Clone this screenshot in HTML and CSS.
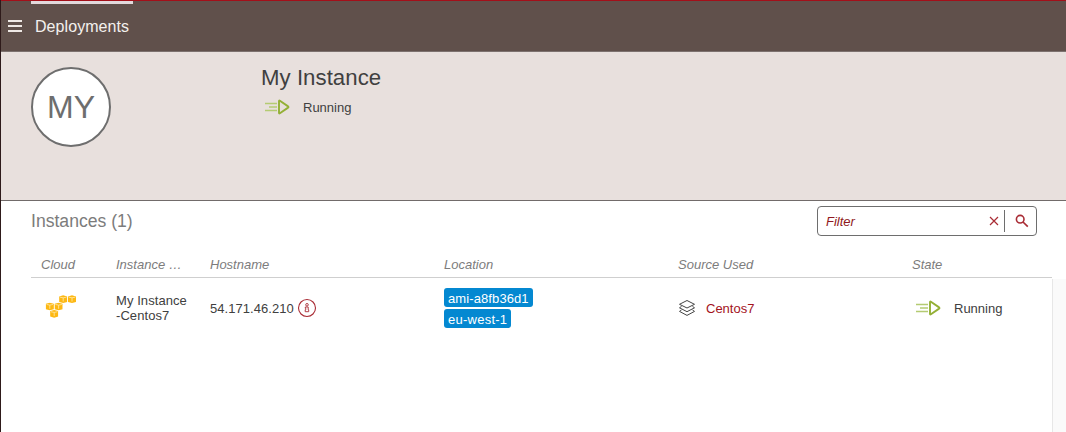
FILE: index.html
```html
<!DOCTYPE html>
<html lang="en">
<head>
<meta charset="utf-8">
<title>Deployments</title>
<link rel="stylesheet" href="styles.css">
</head>
<body>
<svg class="defs" width="0" height="0">
  <symbol id="run" viewBox="0 0 26 16">
    <path d="M1 4.5h12M5 8h8M1 11.5h12" fill="none" stroke="#b4cb72" stroke-width="1.4"/>
    <path d="M15 2.2v11.6q0 1 .9.4l8.200-5.600q.8-.6 0-1.200l-8.200-5.600q-.9-.6-.9.4z" fill="none" stroke="#94b036" stroke-width="1.9" stroke-linejoin="round"/>
  </symbol>
  <symbol id="box" viewBox="0 0 9 9">
    <path d="M.2 1.6 4.500.4 8.800 1.600V7.400L4.500 8.600.2 7.400z" fill="#fdb813"/>
    <path d="M1 2.300 4.500 3 8 2.300M4.500 3V7" fill="none" stroke="#ffedb8" stroke-width=".8"/>
  </symbol>
</svg>
<div class="app">
  <header class="topbar">
    <svg class="menu" viewBox="0 0 14 12"><path d="M0 1h14M0 6h14M0 11h14" stroke="#eee8e5" stroke-width="2"/></svg>
    <div class="tab">Deployments</div>
  </header>
  <section class="banner">
    <div class="avatar">MY</div>
    <div class="summary">
      <h1 class="title">My Instance</h1>
      <div class="state"><svg class="run"><use href="#run"/></svg><span>Running</span></div>
    </div>
  </section>
  <main class="content">
    <div class="toolbar">
      <h2 class="heading">Instances (1)</h2>
      <div class="filter">
        <span class="placeholder">Filter</span>
        <svg class="clear" viewBox="0 0 10 10"><path d="M1 1l8 8M9 1l-8 8" stroke="#a92c35" stroke-width="1.2"/></svg>
        <span class="divider"></span>
        <svg class="search" viewBox="0 0 14 14"><circle cx="5.2" cy="5.2" r="3.8" fill="none" stroke="#a92c35" stroke-width="1.6"/><path d="M8 8l4.8 4.6" stroke="#a92c35" stroke-width="1.7"/></svg>
      </div>
    </div>
    <div class="row head">
      <span>Cloud</span><span>Instance …</span><span>Hostname</span><span>Location</span><span>Source Used</span><span>State</span>
    </div>
    <div class="body">
      <div class="row data">
        <div class="cloud">
          <svg width="32" height="24" viewBox="0 0 32 24">
            <use href="#box" x="14" y="1" width="8.4" height="8.4"/>
            <use href="#box" x="22.8" y="1" width="8.4" height="8.4"/>
            <use href="#box" x="0.6" y="8.3" width="8.4" height="8.4"/>
            <use href="#box" x="9.4" y="8.3" width="8.4" height="8.4"/>
            <use href="#box" x="5" y="15.6" width="8.4" height="8.4"/>
          </svg>
        </div>
        <div class="name">My Instance<br>-Centos7</div>
        <div class="host"><span>54.171.46.210</span>
          <svg width="20" height="20" viewBox="0 0 20 20" fill="none" stroke="#a92c35"><circle cx="10" cy="10" r="8.5" stroke-width="1.1"/><circle cx="10" cy="6.800" r="1.300" stroke-width=".9"/><path d="M8.300 9h2.900v2.800h.5v1.900H8.200v-1.900h.6V10.300h-.5z" stroke-width=".9"/></svg>
        </div>
        <div class="tags"><span class="tag">ami-a8fb36d1</span><span class="tag region">eu-west-1</span></div>
        <div class="source">
          <svg width="18" height="18" viewBox="0 0 18 18" fill="none" stroke="#444" stroke-width="1" stroke-linejoin="round"><path d="M9 1.500l7.500 3.800L9 9 1.500 5.300zM3.500 7.400l-2 1.400L9 12.700l7.500-3.900-2-1.400M3.500 11l-2 1.400L9 16.400l7.500-4-2-1.400"/></svg>
          <span>Centos7</span>
        </div>
        <div class="state"><svg class="run"><use href="#run"/></svg><span>Running</span></div>
      </div>
      <div class="scrollbar"></div>
    </div>
  </main>
</div>
</body>
</html>
```
FILE: styles.css
```css
* { box-sizing: border-box; }
body {
  margin: 0;
  font: 13px/15px "Liberation Sans", Arial, sans-serif;
  color: #404040;
  background: #fff;
}
.defs { display: block; height: 0; }
.app {
  height: 432px;
  display: flex;
  flex-direction: column;
  border-left: 1px solid #2e1a1a;
  overflow: hidden;
}
.topbar {
  height: 52px;
  flex: none;
  display: flex;
  align-items: flex-start;
  background: #60504b;
  border-top: 1px solid #a30f19;
  border-bottom: 1px solid #7d726f;
}
.menu { width: 14px; height: 12px; margin: 19px 9px 0 7px; }
.tab {
  width: 102px;
  height: 50px;
  padding-left: 4px;
  border-top: 3px solid #e2d9dc;
  font-size: 16px;
  line-height: 45px;
  letter-spacing: .07px;
  color: #f4f0ee;
}
.banner {
  height: 149px;
  flex: none;
  display: flex;
  padding: 15px 0 0 30px;
  background: #e8e0dd;
  border-bottom: 1px solid #716b6a;
}
.avatar {
  width: 80px;
  height: 80px;
  border: 2px solid #6e6e6e;
  border-radius: 50%;
  background: #fff;
  color: #6e6e6e;
  font-size: 32px;
  line-height: 76px;
  text-align: center;
}
.summary { margin-left: 150px; }
.title { margin: -2px 0 0; font-size: 22.2px; line-height: 26px; font-weight: 400; letter-spacing: .05px; }
.state { display: flex; align-items: center; gap: 13px; }
.summary .state { margin: 8px 0 0 3px; }
.run { width: 26px; height: 16px; }
.content { flex: 1; display: flex; flex-direction: column; padding-left: 30px; }
.toolbar { height: 50px; display: flex; justify-content: space-between; padding: 5px 29px 0 0; }
.heading { margin: 0; font-size: 17.6px; line-height: 30px; font-weight: 400; color: #7c7c7c; }
.filter {
  width: 220px;
  height: 30px;
  display: flex;
  align-items: center;
  padding: 0 7px 0 8px;
  border: 1px solid #6e6e6e;
  border-radius: 4px;
}
.placeholder { flex: 1; font-style: italic; color: #8f1820; }
.clear { width: 10px; height: 10px; }
.divider { width: 1px; height: 22px; margin: 0 10px 0 5px; background: #6e6e6e; }
.search { width: 14px; height: 14px; }
.row { width: 1021px; display: grid; grid-template-columns: 85px 94px 234px 234px 234px 140px; }
.head {
  height: 27px;
  font-style: italic;
  line-height: 27px;
  color: #7c7c7c;
  border-bottom: 1px solid #cfcfcf;
}
.head span:first-child { padding-left: 10px; }
.body { flex: 1; display: flex; }
.data { height: 60px; align-items: center; }
.name { letter-spacing: .07px; }
.cloud { padding-left: 14px; height: 28px; }
.host { display: flex; align-items: center; gap: 3px; letter-spacing: .05px; }
.tags { display: flex; flex-direction: column; align-items: flex-start; gap: 2px; }
.tag { height: 19px; padding: 0 4px; line-height: 21px; letter-spacing: .1px; border-radius: 3px; background: #0488d1; color: #fff; }
.region { letter-spacing: .25px; }
.source { display: flex; align-items: center; gap: 10px; color: #a3131d; }
.data .state { padding-left: 3px; }
.scrollbar { flex: 1; margin-top: 1px; background: #fafafa; border-left: 1px solid #e7e7e7; }
```
